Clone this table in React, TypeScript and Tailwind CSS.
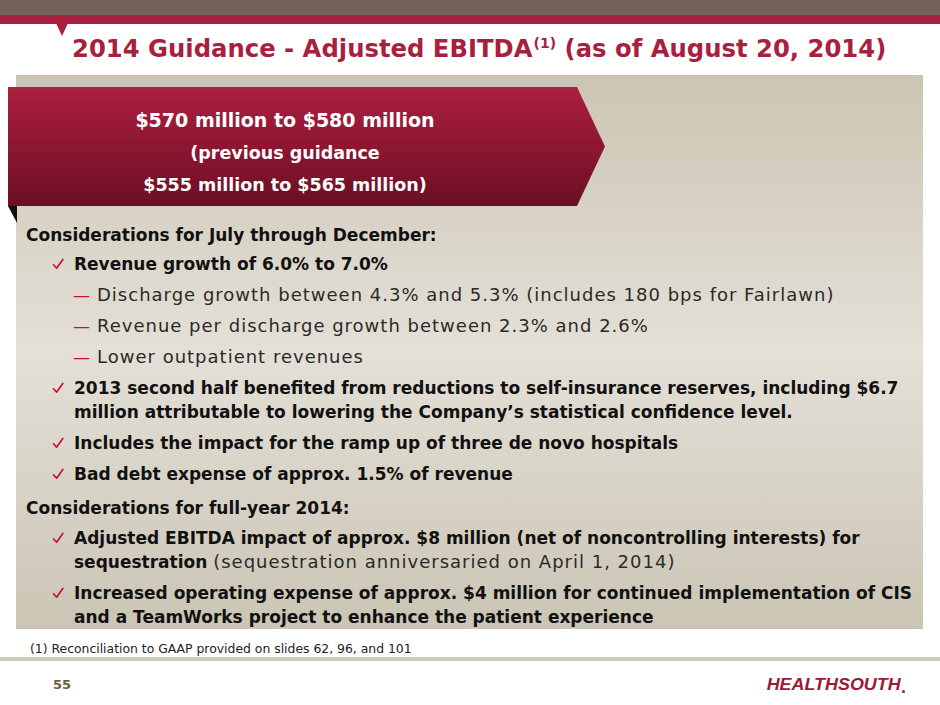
import React from "react"

const font = { fontFamily: '"DejaVu Sans", "Liberation Sans", sans-serif' }

function Check() {
  return (
    <svg viewBox="0 0 12 12" className="h-[12px] w-[12px] shrink-0 mt-[6px]">
      <path d="M1.5 6.8 L4.6 10.2 L10.8 1.5" fill="none" stroke="#c8102e" strokeWidth="1.7" strokeLinecap="round" strokeLinejoin="round" />
    </svg>
  )
}

function CheckItem({ children }: { children: React.ReactNode }) {
  return (
    <div className="flex gap-[10px] pl-[36px]">
      <Check />
      <div className="font-bold leading-[24px]">{children}</div>
    </div>
  )
}

function DashItem({ children }: { children: React.ReactNode }) {
  return (
    <div className="flex pl-[57px] leading-[24px] font-normal text-[#2a2a2a]">
      <span className="text-[#c8102e] w-[24px] text-[17px]">—</span>
      <span className="text-[18px] tracking-[1px]">{children}</span>
    </div>
  )
}

export default function App() {
  return (
    <div className="w-[940px] h-[705px] bg-white overflow-hidden relative" style={font}>
      {/* Header bars */}
      <div className="h-[15px] bg-[#746359]" />
      <div className="h-[9px] bg-[#a81f3f]" />
      <svg className="absolute left-[56px] top-[23px]" width="12" height="13" viewBox="0 0 12 13">
        <polygon points="0,0 12,0 6,13" fill="#a81f3f" />
      </svg>

      {/* Title */}
      <div className="h-[51px] pl-[72px] pt-[0px]">
        <h1 className="text-[24.3px] font-bold text-[#a81f3f] leading-[38px] whitespace-nowrap">
          2014 Guidance - Adjusted EBITDA<span className="text-[14px] align-[9px] ml-[1px]">(1)</span> (as of August 20, 2014)
        </h1>
      </div>

      {/* Content panel */}
      <div className="relative ml-[16px] w-[907px] h-[554px] bg-[linear-gradient(180deg,#ccc5b4_0%,#e4e0d7_50%,#cbc5b5_100%)] pt-[12px]">
        <div className="-ml-[8px] w-[597px] h-[119px] bg-[linear-gradient(180deg,#ab203f_0%,#8d1631_50%,#6a0f23_100%)] [clip-path:polygon(0_0,calc(100%_-_28px)_0,100%_50%,calc(100%_-_28px)_100%,0_100%)] flex flex-col items-center justify-center pr-[43px] pt-[11px] text-white font-bold">
          <div className="text-[19px] leading-[33px]">$570 million to $580 million</div>
          <div className="text-[17.5px] leading-[32px]">(previous guidance</div>
          <div className="text-[17.5px] leading-[32px]">$555 million to $565 million)</div>
        </div>
        <svg className="absolute left-[-8px] top-[131px]" width="9" height="17" viewBox="0 0 9 17">
          <polygon points="0,0 9,0 9,17" fill="#111" />
        </svg>

        <div className="text-[17px] text-[#111] pt-[14px] flex flex-col">
          <div className="pl-[10px] font-bold leading-[31px]">Considerations for July through December:</div>
          <div className="flex flex-col gap-[7px] mt-[1px]">
            <CheckItem>Revenue growth of 6.0% to 7.0%</CheckItem>
            <DashItem>Discharge growth between 4.3% and 5.3% (includes 180 bps for Fairlawn)</DashItem>
            <DashItem>Revenue per discharge growth between 2.3% and 2.6%</DashItem>
            <DashItem>Lower outpatient revenues</DashItem>
            <CheckItem>
              2013 second half benefited from reductions to self-insurance reserves, including $6.7
              <br />
              million attributable to lowering the Company’s statistical confidence level.
            </CheckItem>
            <CheckItem>Includes the impact for the ramp up of three de novo hospitals</CheckItem>
            <CheckItem>Bad debt expense of approx. 1.5% of revenue</CheckItem>
          </div>
          <div className="pl-[10px] font-bold leading-[31px] mt-[7px]">Considerations for full-year 2014:</div>
          <div className="flex flex-col gap-[7px] mt-[2px]">
            <CheckItem>
              Adjusted EBITDA impact of approx. $8 million (net of noncontrolling interests) for
              <br />
              sequestration{" "}
              <span className="font-normal text-[#2a2a2a] text-[18px] tracking-[1px]">(sequestration anniversaried on April 1, 2014)</span>
            </CheckItem>
            <CheckItem>
              Increased operating expense of approx. $4 million for continued implementation of CIS
              <br />
              and a TeamWorks project to enhance the patient experience
            </CheckItem>
          </div>
        </div>
      </div>

      {/* Footnote */}
      <div className="pl-[30px] pt-[12px] text-[12.4px] leading-[16px] text-[#222] h-[28px]">
        (1) Reconciliation to GAAP provided on slides 62, 96, and 101
      </div>
      <div className="h-[4px] bg-[#d0c9b9]" />

      {/* Footer */}
      <div className="flex items-center justify-between pl-[53px] pr-[35px] pt-[14px]">
        <div className="text-[13px] font-bold text-[#6b5d3e]">55</div>
        <div className="flex items-end">
          <span
            className="text-[16px] font-black italic text-[#9c1a33] leading-none scale-x-[1.12] origin-right"
            style={{ fontFamily: '"Liberation Sans", Arial, sans-serif' }}
          >
            HEALTHSOUTH
          </span>
          <span className="w-[3px] h-[3px] rounded-full bg-[#9c1a33] ml-[1px]" />
        </div>
      </div>
    </div>
  )
}
